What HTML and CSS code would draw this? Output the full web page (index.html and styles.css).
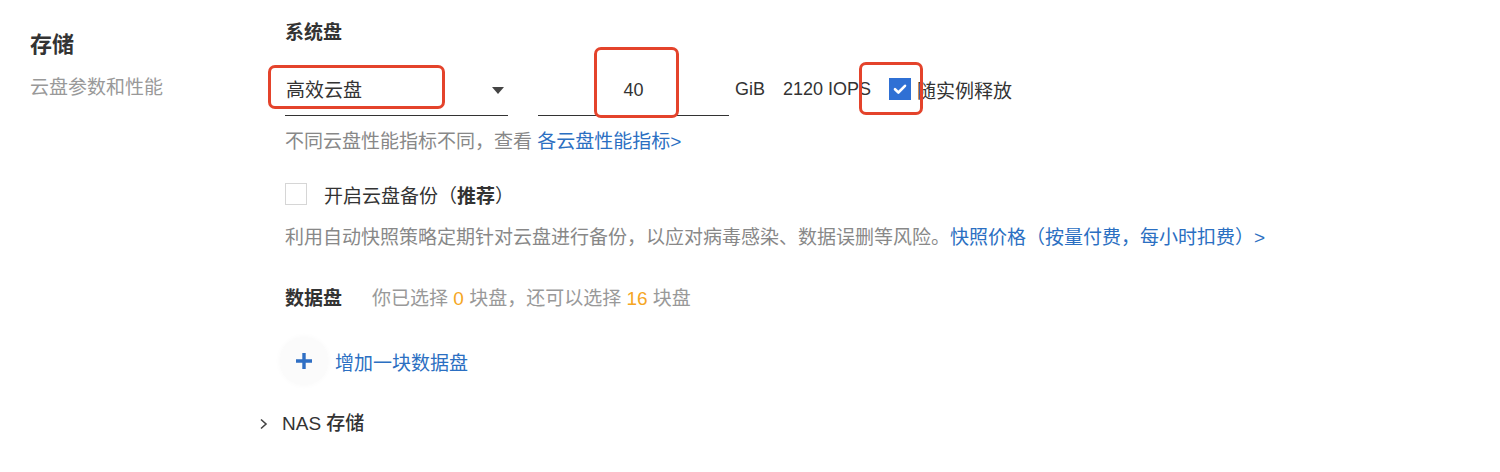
FILE: index.html
```html
<!DOCTYPE html>
<html lang="zh-CN">
<head>
<meta charset="utf-8">
<title>存储</title>
<link rel="stylesheet" href="styles.css">
</head>
<body>
<div class="page">
  <aside class="side">
    <h2 class="side-title">存储</h2>
    <p class="side-desc">云盘参数和性能</p>
  </aside>
  <main class="main">
    <div class="sec-title">系统盘</div>
    <div class="disk-row">
      <div class="select">
        <span class="select-text">高效云盘</span>
        <span class="arrow"></span>
        <span class="mark mark-select"></span>
      </div>
      <div class="size-input">
        <span class="size-val">40</span>
        <span class="mark mark-input"></span>
      </div>
      <span class="unit">GiB</span>
      <span class="unit iops">2120 IOPS</span>
      <span class="chk chk-on">
        <svg viewBox="0 0 22 22" width="22" height="22"><path d="M6 11.2l3.4 3.3L16 7.8" fill="none" stroke="#fff" stroke-width="2.6" stroke-linecap="round" stroke-linejoin="round"/></svg>
        <span class="mark mark-chk"></span>
      </span>
      <span class="chk-label">随实例释放</span>
    </div>
    <p class="hint">不同云盘性能指标不同，查看 <a class="link">各云盘性能指标&gt;</a></p>
    <div class="backup-row">
      <span class="chk chk-off"></span>
      <span class="backup-label">开启云盘备份（<b>推荐</b>）</span>
    </div>
    <p class="hint desc">利用自动快照策略定期针对云盘进行备份，以应对病毒感染、数据误删等风险。<a class="link">快照价格（按量付费，每小时扣费）&gt;</a></p>
    <div class="data-row">
      <span class="data-title">数据盘</span>
      <span class="data-info">你已选择 <em>0</em> 块盘，还可以选择 <em>16</em> 块盘</span>
    </div>
    <div class="add-row">
      <span class="add-btn">
        <svg viewBox="0 0 20 20" width="20" height="20"><path d="M10 2v16M2 10h16" stroke="#2f6fc4" stroke-width="3.4"/></svg>
      </span>
      <a class="link add-text">增加一块数据盘</a>
    </div>
    <div class="nas-row">
      <svg class="chev" viewBox="0 0 10 12" width="10" height="12"><path d="M2 1.5l5 4.5-5 4.5" fill="none" stroke="#444" stroke-width="1.6"/></svg>
      <span class="nas-text">NAS 存储</span>
    </div>
  </main>
</div>
</body>
</html>
```
FILE: styles.css
```css
* { box-sizing: border-box; }
html, body { margin: 0; padding: 0; background: #fff; }
body {
  font-family: "Liberation Sans", "Noto Sans CJK SC", sans-serif;
  font-size: 19px;
  color: #333;
  width: 1500px;
  height: 472px;
  overflow: hidden;
}
.page {
  display: flex;
  padding-left: 30px;
}
.side {
  width: 255px;
  flex: none;
  padding-top: 30px;
}
.side-title {
  margin: 0;
  font-size: 22px;
  line-height: 30px;
  font-weight: 700;
  color: #333;
}
.side-desc {
  margin: 15px 0 0;
  line-height: 26px;
  color: #999;
}
.main {
  flex: 1;
  padding-top: 20px;
}
.sec-title {
  line-height: 26px;
  font-weight: 700;
  color: #333;
}
.disk-row {
  margin-top: 16px;
  display: flex;
  align-items: center;
  height: 54px;
}
.select {
  position: relative;
  width: 223px;
  height: 54px;
  border-bottom: 1px solid #333;
  display: flex;
  align-items: center;
  justify-content: space-between;
  padding: 0 4px 0 1px;
  color: #333;
}
.arrow {
  width: 0;
  height: 0;
  border-left: 6px solid transparent;
  border-right: 6px solid transparent;
  border-top: 7px solid #444;
  margin-top: 3px;
}
.size-input {
  position: relative;
  margin-left: 30px;
  width: 191px;
  height: 54px;
  border-bottom: 1px solid #333;
  display: flex;
  align-items: center;
  justify-content: center;
  font-size: 18px;
  color: #333;
}
.size-val { margin-top: 3px; }
.unit {
  font-size: 18px;
  margin-left: 6px;
  color: #333;
}
.iops { margin-left: 18px; }
.chk {
  position: relative;
  width: 22px;
  height: 22px;
  flex: none;
  display: inline-flex;
}
.chk-on {
  margin-left: 18px;
  background: #2f70d4;
}
.chk-off {
  border: 1px solid #d6d6d6;
  background: #fff;
}
.chk-label {
  margin-left: 6px;
}
.mark {
  position: absolute;
  border: 3px solid #e4432b;
  border-radius: 7px;
  pointer-events: none;
}
.mark-select { left: -17px; top: 3px; width: 177px; height: 44px; }
.mark-input { left: 56px; top: -15px; width: 85px; height: 71px; }
.mark-chk { left: -30px; top: -16px; width: 64px; height: 53px; }
.hint {
  margin: 13px 0 0;
  line-height: 26px;
  color: #888;
}
.link {
  color: #2b6fc2;
  text-decoration: none;
}
.backup-row {
  margin-top: 26px;
  display: flex;
  align-items: center;
  height: 26px;
}
.backup-label {
  margin-left: 17px;
  color: #333;
}
.backup-label b { font-weight: 700; }
.desc { margin-top: 18px; }
.data-row {
  margin-top: 35px;
  display: flex;
  align-items: center;
  line-height: 26px;
}
.data-title {
  font-weight: 700;
  color: #333;
  width: 87px;
}
.data-info { color: #999; }
.data-info em {
  font-style: normal;
  color: #f5a623;
}
.add-row {
  margin-top: 25px;
  margin-left: -5px;
  display: flex;
  align-items: center;
  height: 48px;
}
.add-btn {
  width: 48px;
  height: 48px;
  border-radius: 50%;
  background: #fbfbfb;
  box-shadow: 0 0 6px rgba(0,0,0,0.03);
  display: flex;
  align-items: center;
  justify-content: center;
}
.add-text { margin-left: 7px; }
.nas-row {
  margin-top: 26px;
  margin-left: -26px;
  display: flex;
  align-items: center;
  line-height: 26px;
}
.chev { flex: none; }
.nas-text {
  margin-left: 13px;
  font-size: 19px;
  font-weight: 500;
  color: #333;
}
```
